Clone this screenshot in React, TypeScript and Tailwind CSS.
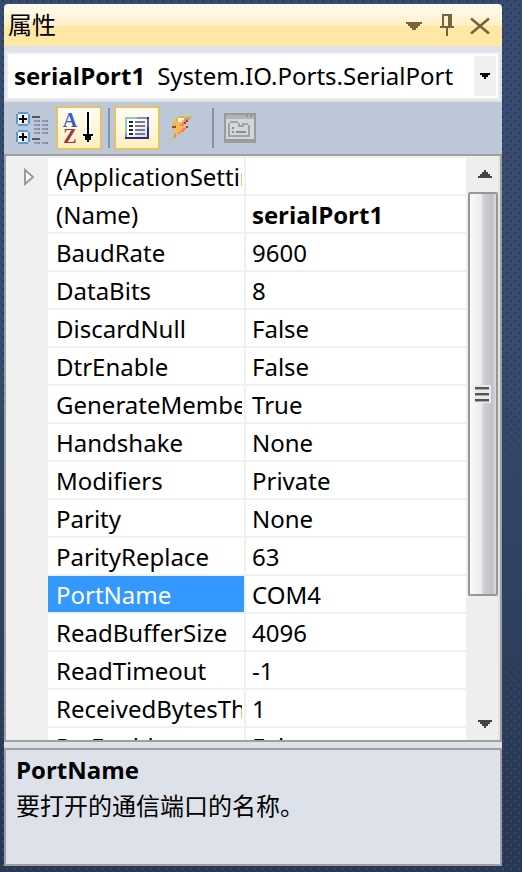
import React from "react";

type Property = { name: string; value: string; bold?: boolean; expandable?: boolean };

const properties: Property[] = [
  { name: "(ApplicationSettings)", value: "", expandable: true },
  { name: "(Name)", value: "serialPort1", bold: true },
  { name: "BaudRate", value: "9600" },
  { name: "DataBits", value: "8" },
  { name: "DiscardNull", value: "False" },
  { name: "DtrEnable", value: "False" },
  { name: "GenerateMember", value: "True" },
  { name: "Handshake", value: "None" },
  { name: "Modifiers", value: "Private" },
  { name: "Parity", value: "None" },
  { name: "ParityReplace", value: "63" },
  { name: "PortName", value: "COM4" },
  { name: "ReadBufferSize", value: "4096" },
  { name: "ReadTimeout", value: "-1" },
  { name: "ReceivedBytesThreshold", value: "1" },
  { name: "RtsEnable", value: "False" },
];

const selected = "PortName";

function Backdrop() {
  return (
    <svg className="absolute inset-0 -z-10 h-full w-full" aria-hidden="true">
      <defs>
        <linearGradient id="base" x1="0" y1="0" x2="0" y2="1">
          <stop offset="0.4" stopColor="#364b6f" />
          <stop offset="0.9" stopColor="#293955" />
        </linearGradient>
        <linearGradient id="dots" x1="0" y1="0" x2="0" y2="1">
          <stop offset="0.4" stopColor="#2b3c5a" />
          <stop offset="0.9" stopColor="#35496b" />
        </linearGradient>
        <pattern id="tile" width="8" height="8" patternUnits="userSpaceOnUse">
          <path d="M2 0h2v2h-2zM6 4h2v2h-2z" fill="#fff" />
        </pattern>
        <mask id="weave">
          <rect width="100%" height="100%" fill="url(#tile)" />
        </mask>
      </defs>
      <rect width="100%" height="100%" fill="url(#base)" />
      <rect width="100%" height="100%" fill="url(#dots)" mask="url(#weave)" />
    </svg>
  );
}

function TitleBar() {
  return (
    <header className="flex h-[42px] shrink-0 items-center justify-between rounded-t-sm bg-[linear-gradient(#fffcf3,#fff0c9_50%,#ffe8a6_53%,#ffe8a6)] pr-2.5 pl-1">
      <h1 className="text-2xl leading-8">属性</h1>
      <div className="flex items-center gap-3.5">
        <button aria-label="Window position" className="block">
          <svg width="20" height="32" shapeRendering="crispEdges" fill="#75633d">
            <path d="M0 13h16v2h-2v2h-2v2h-2v2h-4v-2h-2v-2h-2v-2h-2z" />
          </svg>
        </button>
        <button aria-label="Auto hide" className="block">
          <svg width="14" height="32" shapeRendering="crispEdges" fill="#75633d">
            <path d="M2 5h10v12h2v2h-6v8h-2v-8h-6v-2h2zM4 7v10h4v-10z" fillRule="evenodd" />
          </svg>
        </button>
        <button aria-label="Close" className="block">
          <svg width="24" height="32" stroke="#75633d" strokeWidth="2.6">
            <path d="M3 9.500L21 24.500M21 9.500L3 24.500" />
          </svg>
        </button>
      </div>
    </header>
  );
}

function ObjectPicker() {
  return (
    <div className="shrink-0 bg-[#dde1e9] px-0.5 pt-1.5 pb-0.5">
      <div className="relative flex h-12 items-center border-2 border-[#ececec] bg-white pl-1.5">
        <label htmlFor="object" className="font-['Open_Sans','Noto_Sans',sans-serif] text-2xl leading-9 font-bold">
          serialPort1
        </label>
        <select
          id="object"
          className="h-full min-w-0 flex-1 appearance-none bg-transparent pl-3 text-2xl leading-9 outline-none"
        >
          <option>System.IO.Ports.SerialPort</option>
        </select>
        <span className="pointer-events-none absolute inset-y-0 right-0.5 my-0.5 flex w-[22px] items-center justify-center bg-[#f0f0f0]">
          <svg width="10" height="6" shapeRendering="crispEdges">
            <path d="M0 0h10v2h-2v2h-2v2h-2v-2h-2v-2h-2z" />
          </svg>
        </span>
      </div>
    </div>
  );
}

function CategorizedIcon() {
  const rows = [120, 124, 128, 132, 142];
  return (
    <svg width="32" height="32" viewBox="16 112 32 32" shapeRendering="crispEdges">
      {[112, 130].map((y) => (
        <g key={y} transform={`translate(16 ${y})`}>
          <path d="M2 0h10v2h2v10h-2v2h-10v-2h-2v-10h2z" fill="#5b9bd5" />
          <path d="M2 2h10v10h-10z" fill="#f1f4fc" />
          <path d="M10 8h2v4h-6v-2h4z" fill="#dfe3d8" />
          <path d="M6 3h2v3h3v2h-3v3h-2v-3h-3v-2h3z" fill="#000" />
        </g>
      ))}
      <path d="M32 116h8v2h-8zM32 138h8v2h-8z" fill="#55585c" />
      {rows.map((y) => (
        <g key={y}>
          <path d={`M34 ${y}h4v2h-4zM42 ${y}h4v2h-4z`} fill="#9a93c0" />
          <path d={`M38 ${y}h2v2h-2zM46 ${y}h2v2h-2z`} fill="#6e9c9c" />
        </g>
      ))}
    </svg>
  );
}

function ArrowIcon() {
  return (
    <svg width="14" height="32" shapeRendering="crispEdges">
      <path d="M4 2h2v18h-2zM8 2h2v18h-2zM0 20h14v4h-2v4h-4v4h-2v-4h-4v-4h-2z" fill="#fff" opacity="0.7" />
      <path d="M6 0h2v30h-2zM2 22h10v2h-10zM4 24h6v4h-6z" fill="#000" />
    </svg>
  );
}

function ListIcon() {
  return (
    <svg width="24" height="22" shapeRendering="crispEdges">
      <defs>
        <linearGradient id="sheet" x1="0" y1="0" x2="1" y2="1">
          <stop offset="0.4" stopColor="#ffffff" />
          <stop offset="1" stopColor="#cfd8fa" />
        </linearGradient>
      </defs>
      <rect width="24" height="22" fill="#2c2f6e" />
      <path d="M0 0h12v2h-10v18h-2z" fill="#8fc6c8" />
      <path d="M12 0h10v2h-10zM0 16h2v4h-2z" fill="#8d8fd0" />
      <path d="M22 2h2v8h-2z" fill="#5a5fa8" />
      <rect x="2" y="2" width="20" height="18" fill="url(#sheet)" />
      <path d="M4 4h4v2h-4zM4 8h4v2h-4zM4 12h4v2h-4zM4 16h4v2h-4z" fill="#222" />
      <path d="M10 4h10v2h-10zM10 8h10v2h-10zM10 12h10v2h-10zM10 16h10v2h-10z" fill="#7c7c80" />
    </svg>
  );
}

function BoltIcon() {
  return (
    <svg width="20" height="24" shapeRendering="crispEdges">
      <path d="M6 0h14v2h-2v2h-2v2h-2v2h-2v2h4v2h-2v2h-2v2h-2v2h-4v2h-2v2h-2v2h-2v-4h2v-4h2v-2h-4v-2h-2v-2h2v-4h2v-4h2z" fill="#f7b955" />
      <path d="M4 2h2v4h-2zM2 6h2v4h-2zM6 0h6v2h-6zM14 0h6v2h-6z" fill="#c5bd5b" />
      <path d="M6 2h6v2h-2v2h-4z" fill="#fff4cf" />
      <path d="M12 2h6v2h-2v2h-2v2h-2v2h-4v-2h2v-2h2zM10 12h4v2h-2v2h-4v2h-2v-2h2v-2h2z" fill="#f5806f" />
      <path d="M14 4h2v2h-2zM12 6h2v2h-2zM14 10h2v2h-2zM0 10h4v2h-4z" fill="#8f4a3c" />
      <path d="M2 18h2v4h-2z" fill="#b9a06a" />
    </svg>
  );
}

function PagesIcon() {
  return (
    <svg width="32" height="30" shapeRendering="crispEdges">
      <rect width="32" height="30" fill="#999b9e" />
      <rect x="2" y="2" width="28" height="4" fill="#b2b4b6" />
      <rect x="2" y="6" width="28" height="20" fill="#d3d6da" />
      <path d="M22 2h2v2h-2zM26 2h2v2h-2z" fill="#8c8e91" />
      <path d="M6 8h8v2h2v2h2v-2h6v2h2v12h-22v-14h2zM6 10v12h18v-10h-4v2h-6v-4z" fill="#9fa2a6" fillRule="evenodd" />
      <path d="M8 14h2v2h-2zM8 18h2v2h-2zM12 18h10v2h-10z" fill="#8c8e91" />
    </svg>
  );
}

const pressed =
  "flex h-11 w-[46px] items-center justify-center border-2 border-[#e5c365] bg-linear-to-b from-[#fffcf4] to-[#ffefbf]";

function Toolbar() {
  return (
    <div
      role="toolbar"
      aria-label="Properties"
      className="flex h-[54px] shrink-0 items-center border-b-2 border-[#a0a0a0] bg-[#bcc7d8] pl-3"
    >
      <button aria-label="Categorized">
        <CategorizedIcon />
      </button>
      <button aria-label="Alphabetical" aria-pressed="true" className={`${pressed} ml-2 gap-1`}>
        <span className="flex flex-col font-['Liberation_Serif',serif] text-xl leading-4 font-bold">
          <span className="text-[#2f5fc4]">A</span>
          <span className="text-[#9c3a3e]">Z</span>
        </span>
        <ArrowIcon />
      </button>
      <span className="mx-1.5 h-10 w-0.5 bg-[#8591a2]" />
      <button aria-label="Properties" aria-pressed="true" className={`${pressed} -ml-0.5`}>
        <ListIcon />
      </button>
      <button aria-label="Events" className="ml-3">
        <BoltIcon />
      </button>
      <span className="ml-5 h-10 w-0.5 bg-[#8591a2]" />
      <button aria-label="Property pages" disabled className="ml-2.5">
        <PagesIcon />
      </button>
    </div>
  );
}

function PropertyTable() {
  return (
    <table className="w-full min-w-0 table-fixed border-separate border-spacing-0 border-t-2 border-[#f0f0f0] text-2xl leading-9">
      <colgroup>
        <col className="w-[42px]" />
        <col className="w-[198px]" />
        <col />
      </colgroup>
      <tbody>
        {properties.map((p) => (
          <tr key={p.name}>
            <td className="bg-[#f0f0f0] p-0">
              {p.expandable && (
                <button aria-label={`Expand ${p.name}`} className="ml-[18px] block">
                  <svg width="11" height="18" fill="#fff" stroke="#9b9b9b" strokeWidth="2">
                    <path d="M1 2V16L9 9z" />
                  </svg>
                </button>
              )}
            </td>
            <th
              scope="row"
              id={`prop-${p.name}`}
              className={`border-r-2 border-b-2 border-[#f0f0f0] p-0 text-left font-normal ${
                p.name === selected ? "bg-[#3399ff] text-white" : "bg-white"
              }`}
            >
              <div className="mr-0.5 h-9 overflow-hidden pl-2 leading-[38px] whitespace-nowrap">{p.name}</div>
            </th>
            <td className="border-b-2 border-[#f0f0f0] bg-white p-0">
              <input
                type="text"
                aria-labelledby={`prop-${p.name}`}
                defaultValue={p.value}
                className={`block h-9 w-full bg-transparent pt-0.5 pl-1.5 outline-none ${
                  p.bold ? "font-['Open_Sans','Noto_Sans',sans-serif] font-bold" : ""
                }`}
              />
            </td>
          </tr>
        ))}
      </tbody>
    </table>
  );
}

function ScrollBar() {
  return (
    <div className="flex w-[34px] shrink-0 flex-col border-r-2 border-l-2 border-r-[#e3e3e3] border-l-[#f0f0f0] bg-[#eeeeee]">
      <button aria-label="Scroll up" className="flex h-9 shrink-0 items-center justify-center pl-1">
        <svg width="14" height="8" shapeRendering="crispEdges" fill="#444">
          <path d="M6 0h2v2h2v2h2v2h2v2h-14v-2h2v-2h2v-2h2z" />
        </svg>
      </button>
      <div className="min-h-0 flex-1">
        <div className="flex h-[79%] items-center justify-center rounded-xs border-2 border-[#979797] bg-[linear-gradient(90deg,#fafafa,#ebebeb_45%,#d2d2d6_50%,#bfbfc8_85%,#dcdce0)]">
          <svg width="16" height="18" shapeRendering="crispEdges">
            <path d="M0 0h16v18h-16z" fill="#e9e9e9" />
            <path d="M0 2h14v2h-14zM0 8h14v2h-14zM0 14h14v2h-14z" fill="#555" />
            <path d="M0 4h14v1h-14zM0 10h14v1h-14zM0 16h14v1h-14z" fill="#aaa" />
          </svg>
        </div>
      </div>
      <button aria-label="Scroll down" className="flex h-9 shrink-0 items-center justify-center pt-1 pl-1">
        <svg width="14" height="8" shapeRendering="crispEdges" fill="#444">
          <path d="M0 0h14v2h-2v2h-2v2h-2v2h-2v-2h-2v-2h-2v-2h-2z" />
        </svg>
      </button>
    </div>
  );
}

export default function App() {
  return (
    <div className="relative isolate flex h-screen flex-col pt-1 pr-5 pb-1.5 pl-1 font-['Noto_Sans','Noto_Sans_CJK_SC',sans-serif] text-black">
      <Backdrop />
      <TitleBar />
      <ObjectPicker />
      <Toolbar />
      <div className="flex min-h-0 flex-1 items-stretch overflow-hidden border-r-2 border-b-2 border-l-2 border-[#a0a0a0] bg-[#f0f0f0]">
        <div className="min-w-0 flex-1 overflow-hidden">
          <PropertyTable />
        </div>
        <ScrollBar />
      </div>
      <div className="h-1.5 shrink-0 bg-[#dde1e9]" />
      <section className="h-[118px] shrink-0 border-2 border-[#a0a0a0] bg-[#dde1e9] px-2.5 pt-0.5 text-2xl leading-9">
        <h2 className="font-['Open_Sans','Noto_Sans',sans-serif] font-bold">PortName</h2>
        <p>要打开的通信端口的名称。</p>
      </section>
    </div>
  );
}
